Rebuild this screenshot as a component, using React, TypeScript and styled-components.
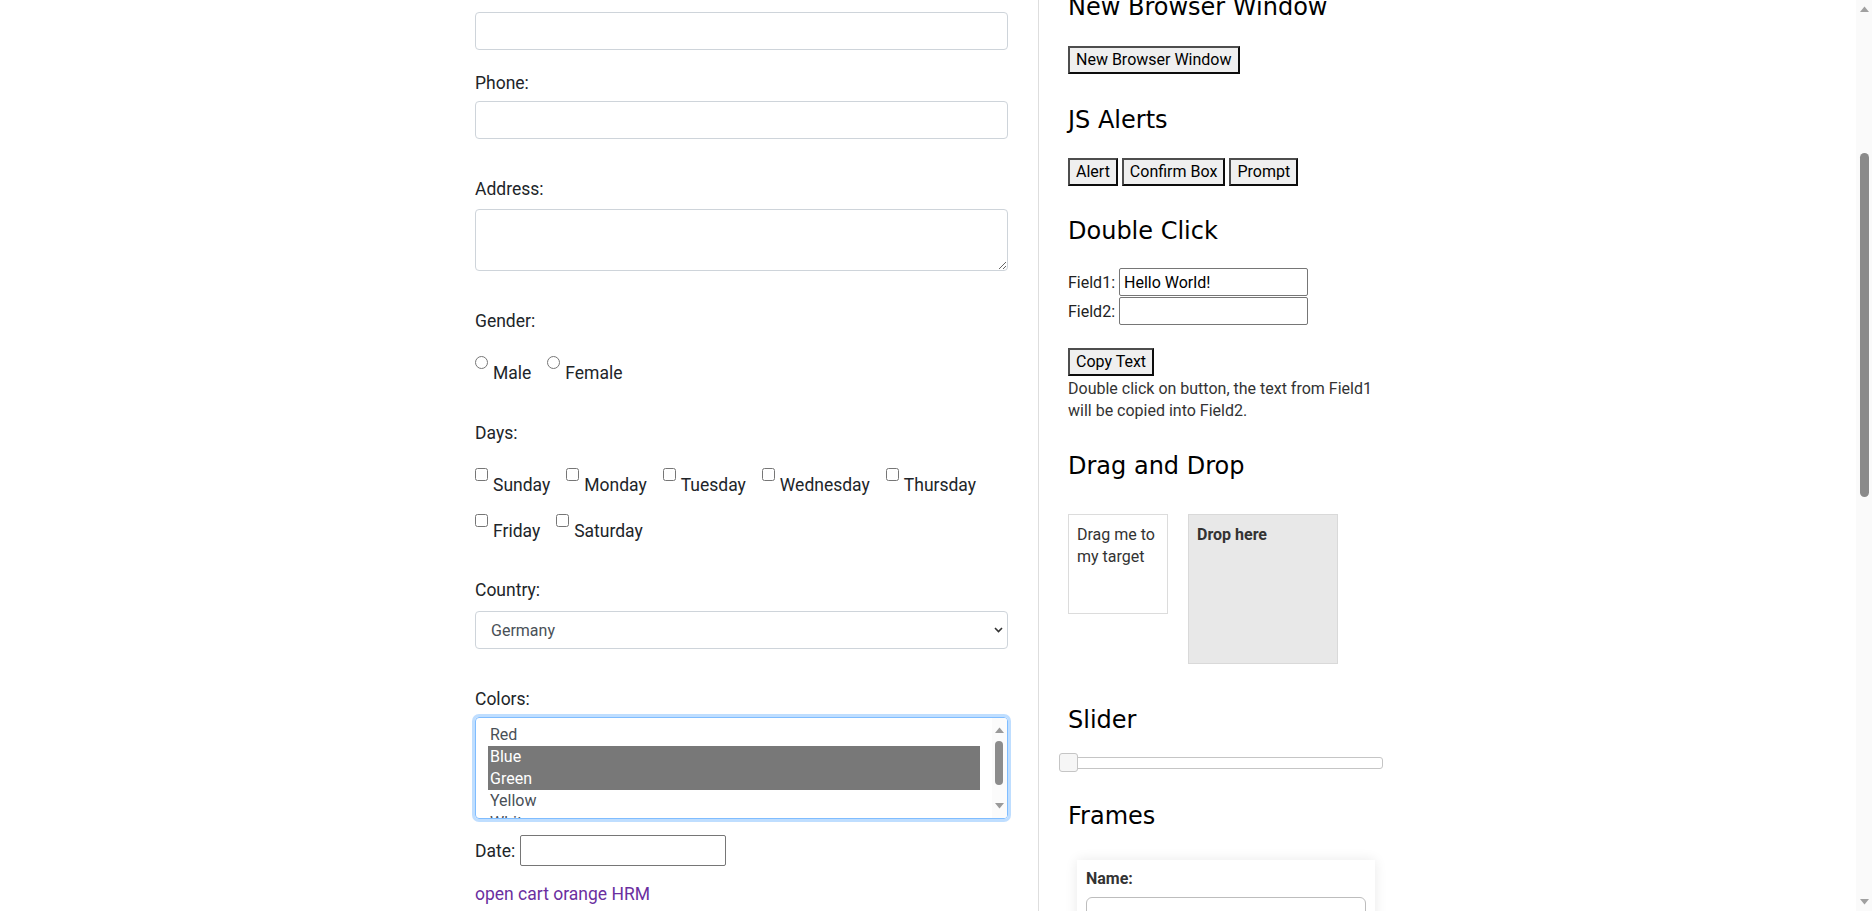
import * as React from 'react';
import styled, { createGlobalStyle } from 'styled-components';

const GlobalStyle = createGlobalStyle`
  html, body {
    margin: 0;
    padding: 0;
    background: #fff;
    overflow: hidden;
  }
  body {
    font-family: Roboto, "Liberation Sans", Arial, sans-serif;
    color: #212529;
  }
  *, *::before, *::after {
    box-sizing: border-box;
  }
`;

const Page = styled.div`
  display: flex;
  height: 100vh;
  overflow: hidden;
`;

const Content = styled.div`
  flex: 1;
  display: flex;
  padding-left: 475px;
  overflow: hidden;
`;

const MainColumn = styled.main`
  width: 533px;
  flex-shrink: 0;
  padding-top: 12px;
`;

const Divider = styled.div`
  width: 1px;
  flex-shrink: 0;
  background: #dedede;
  margin: 0 29px 0 30px;
`;

const Sidebar = styled.aside`
  width: 316px;
  flex-shrink: 0;
  margin-top: -7px;
  font-size: 16px;
  color: #222;
`;

const ScrollStrip = styled.div`
  width: 16px;
  flex-shrink: 0;
  background: #fafafa;
  display: flex;
`;

/* ---------- left form ---------- */

const FieldLabel = styled.label<{ $top: number; $gap?: number }>`
  display: block;
  font-size: 17.5px;
  line-height: 24px;
  margin-top: ${(p) => p.$top}px;
  margin-bottom: ${(p) => p.$gap ?? 6}px;
`;

const TextInput = styled.input`
  display: block;
  width: 100%;
  height: 38px;
  margin: 0;
  padding: 6px 12px;
  border: 1px solid #ced4da;
  border-radius: 4px;
  background: #fff;
  font-family: inherit;
  font-size: 16px;
  color: #495057;
`;

const TextArea = styled.textarea`
  display: block;
  width: 100%;
  height: 62px;
  margin: 0;
  padding: 6px 12px;
  border: 1px solid #ced4da;
  border-radius: 4px;
  font-family: inherit;
  font-size: 16px;
  color: #495057;
`;

const ChoiceRow = styled.div<{ $top: number }>`
  display: flex;
  flex-wrap: wrap;
  row-gap: 17px;
  margin-top: ${(p) => p.$top}px;
`;

const Choice = styled.label`
  display: flex;
  align-items: flex-start;
  margin-right: 16px;
  font-size: 17.5px;
  line-height: 24px;
`;

const ChoiceBox = styled.input`
  width: 13px;
  height: 13px;
  margin: 0 5px 0 0;
  flex-shrink: 0;
`;

const ChoiceText = styled.span<{ $offset: number }>`
  padding-top: ${(p) => p.$offset}px;
`;

const SelectBox = styled.div`
  display: flex;
  align-items: center;
  justify-content: space-between;
  height: 38px;
  margin-top: 9px;
  padding: 0 4px 0 15px;
  border: 1px solid #ced4da;
  border-radius: 4px;
  font-size: 16px;
  color: #495057;
`;

const ListBox = styled.div`
  display: flex;
  height: 102px;
  margin-top: 6px;
  border: 1px solid #80bdff;
  border-radius: 4px;
  box-shadow: 0 0 0 3px rgba(0, 123, 255, 0.25);
  overflow: hidden;
`;

const ListOptions = styled.div`
  flex: 1;
  padding: 6px 12px 0;
  overflow: hidden;
`;

const ListOption = styled.div<{ $selected?: boolean }>`
  height: 22px;
  line-height: 22px;
  padding: 0 2px;
  font-size: 16px;
  background: ${(p) => (p.$selected ? '#787878' : 'transparent')};
  color: ${(p) => (p.$selected ? '#fff' : '#495057')};
`;

const DateRow = styled.div`
  display: flex;
  align-items: center;
  margin-top: 16px;
  font-size: 17.5px;
  line-height: 24px;
`;

const DateInput = styled.input`
  width: 206px;
  height: 31px;
  margin: 0 0 0 5px;
  border: 1px solid #767676;
  border-radius: 2px;
`;

const LinkRow = styled.div`
  margin-top: 16px;
  font-size: 17.5px;
  line-height: 24px;
`;

const PlainLink = styled.a`
  color: #6b2fa0;
  text-decoration: none;
`;

/* ---------- sidebar ---------- */

const Heading = styled.h2<{ $top?: number; $gap?: number }>`
  font-family: "DejaVu Sans", Verdana, sans-serif;
  font-size: 24px;
  font-weight: normal;
  line-height: 28.8px;
  color: #000;
  margin: ${(p) => p.$top ?? 0}px 0 ${(p) => p.$gap ?? 23}px;
`;

const PlainButton = styled.button<{ $top?: number }>`
  display: block;
  height: 28px;
  margin: ${(p) => p.$top ?? 0}px 0 0;
  padding: 0 6px;
  font-family: Roboto, "Liberation Sans", Arial, sans-serif;
  font-size: 16px;
  line-height: 22px;
  color: #000;
  background: #efefef;
  border: 2px solid;
  border-color: #4d4d4d #0d0d0d #0d0d0d #4d4d4d;
  border-radius: 0;
`;

const ButtonRow = styled.div`
  display: flex;
  gap: 4px;
`;

const FieldStack = styled.div`
  display: flex;
  flex-direction: column;
  gap: 1px;
`;

const FieldRow = styled.label`
  display: flex;
  align-items: center;
  gap: 4px;
  font-size: 16px;
`;

const SmallInput = styled.input`
  width: 189px;
  height: 28px;
  margin: 0;
  padding: 1px 4px;
  border: 1px solid #767676;
  border-radius: 2px;
  font-family: inherit;
  font-size: 16px;
  color: #000;
`;

const Note = styled.p`
  margin: 2px 0 0;
  font-size: 16px;
  line-height: 22px;
  color: #333;
`;

const DragZone = styled.div`
  display: flex;
  align-items: flex-start;
  gap: 20px;
`;

const DragBox = styled.div`
  width: 100px;
  height: 100px;
  padding: 9px 8px 8px;
  border: 1px solid #dcdcdc;
  font-size: 16px;
  line-height: 22px;
  color: #333;
`;

const DropBox = styled.div`
  width: 150px;
  height: 150px;
  padding: 9px 8px 8px;
  border: 1px solid #d9d9d9;
  background: #e8e8e8;
  font-size: 16px;
  font-weight: 700;
  line-height: 22px;
  color: #333;
`;

const SliderWrap = styled.div`
  position: relative;
  width: 324px;
  height: 19px;
  margin-left: -9px;
  padding-top: 4px;
`;

const SliderTrack = styled.div`
  height: 12px;
  margin-left: 1px;
  border: 1px solid #c5c5c5;
  border-radius: 3px;
  background: #fff;
`;

const SliderHandle = styled.span`
  position: absolute;
  left: 0;
  top: 0;
  width: 19px;
  height: 19px;
  border: 1px solid #c5c5c5;
  border-radius: 3px;
  background: #f6f6f6;
`;

const FrameCard = styled.div`
  width: 298px;
  height: 140px;
  margin-left: 9px;
  padding: 7px 9px;
  background: #fff;
  box-shadow: 0 0 12px rgba(0, 0, 0, 0.09);
`;

const FrameLabel = styled.div`
  font-size: 16px;
  font-weight: 700;
  line-height: 24px;
  color: #333;
  margin-bottom: 6px;
`;

const FrameInput = styled.input`
  display: block;
  width: 100%;
  height: 38px;
  margin: 0;
  border: 1px solid #bdbdbd;
  border-radius: 6px;
`;

const days = ['Sunday', 'Monday', 'Tuesday', 'Wednesday', 'Thursday', 'Friday', 'Saturday'];
const colors = ['Red', 'Blue', 'Green', 'Yellow', 'White'];
const selectedColors = ['Blue', 'Green'];

const Chevron = () => (
  <svg width="9" height="6" viewBox="0 0 9 6">
    <path d="M1 1 L4.5 4.5 L8 1" fill="none" stroke="#333" strokeWidth="1.6" />
  </svg>
);

const ListScrollbar = () => (
  <svg width="15" height="100" viewBox="0 0 15 100">
    <rect width="15" height="100" fill="#fbfbfb" />
    <path d="M3 15 L7.5 9.5 L12 15 Z" fill="#9a9a9a" />
    <rect x="3" y="23" width="8" height="44" rx="4" fill="#8c8c8c" />
    <path d="M3 85 L7.5 90.5 L12 85 Z" fill="#9a9a9a" />
  </svg>
);

const PageScrollbar = () => (
  <svg width="16" height="911" viewBox="0 0 16 911">
    <path d="M4 12 L8.5 6.5 L13 12 Z" fill="#a0a0a0" />
    <rect x="4" y="153" width="9" height="344" rx="4.5" fill="#8a8a8a" />
    <path d="M4 899 L8.5 904.5 L13 899 Z" fill="#a0a0a0" />
  </svg>
);

const App: React.FC = () => {
  return (
    <Page>
      <GlobalStyle />
      <Content>
        <MainColumn>
          <TextInput type="text" id="email" />

          <FieldLabel $top={21} htmlFor="phone">Phone:</FieldLabel>
          <TextInput type="text" id="phone" />

          <FieldLabel $top={38} $gap={8} htmlFor="textarea">Address:</FieldLabel>
          <TextArea id="textarea" />

          <FieldLabel $top={38}>Gender:</FieldLabel>
          <ChoiceRow $top={23}>
            <Choice>
              <ChoiceBox type="radio" name="gender" />
              <ChoiceText $offset={5}>Male</ChoiceText>
            </Choice>
            <Choice>
              <ChoiceBox type="radio" name="gender" />
              <ChoiceText $offset={5}>Female</ChoiceText>
            </Choice>
          </ChoiceRow>

          <FieldLabel $top={36}>Days:</FieldLabel>
          <ChoiceRow $top={23}>
            {days.map((d) => (
              <Choice key={d}>
                <ChoiceBox type="checkbox" />
                <ChoiceText $offset={5}>{d}</ChoiceText>
              </Choice>
            ))}
          </ChoiceRow>

          <FieldLabel $top={35} $gap={0}>Country:</FieldLabel>
          <SelectBox role="combobox">
            <span>Germany</span>
            <Chevron />
          </SelectBox>

          <FieldLabel $top={38} $gap={0}>Colors:</FieldLabel>
          <ListBox role="listbox">
            <ListOptions>
              {colors.map((c) => (
                <ListOption key={c} $selected={selectedColors.includes(c)}>
                  {c}
                </ListOption>
              ))}
            </ListOptions>
            <ListScrollbar />
          </ListBox>

          <DateRow>
            Date:
            <DateInput type="text" />
          </DateRow>

          <LinkRow>
            <PlainLink href="#">open cart</PlainLink> <PlainLink href="#">orange HRM</PlainLink>
          </LinkRow>
        </MainColumn>

        <Divider />

        <Sidebar>
          <Heading $gap={24}>New Browser Window</Heading>
          <PlainButton>New Browser Window</PlainButton>

          <Heading $top={32}>JS Alerts</Heading>
          <ButtonRow>
            <PlainButton>Alert</PlainButton>
            <PlainButton>Confirm Box</PlainButton>
            <PlainButton>Prompt</PlainButton>
          </ButtonRow>

          <Heading $top={31}>Double Click</Heading>
          <FieldStack>
            <FieldRow>
              Field1:
              <SmallInput type="text" defaultValue="Hello World!" />
            </FieldRow>
            <FieldRow>
              Field2:
              <SmallInput type="text" />
            </FieldRow>
          </FieldStack>
          <PlainButton $top={23}>Copy Text</PlainButton>
          <Note>
            Double click on button, the text from Field1
            <br />
            will be copied into Field2.
          </Note>

          <Heading $top={30} $gap={33}>Drag and Drop</Heading>
          <DragZone>
            <DragBox>Drag me to my target</DragBox>
            <DropBox>Drop here</DropBox>
          </DragZone>

          <Heading $top={42} $gap={18}>Slider</Heading>
          <SliderWrap>
            <SliderTrack />
            <SliderHandle />
          </SliderWrap>

          <Heading $top={30} $gap={29}>Frames</Heading>
          <FrameCard>
            <FrameLabel>Name:</FrameLabel>
            <FrameInput type="text" />
          </FrameCard>
        </Sidebar>
      </Content>
      <ScrollStrip>
        <PageScrollbar />
      </ScrollStrip>
    </Page>
  );
};

export default App;
